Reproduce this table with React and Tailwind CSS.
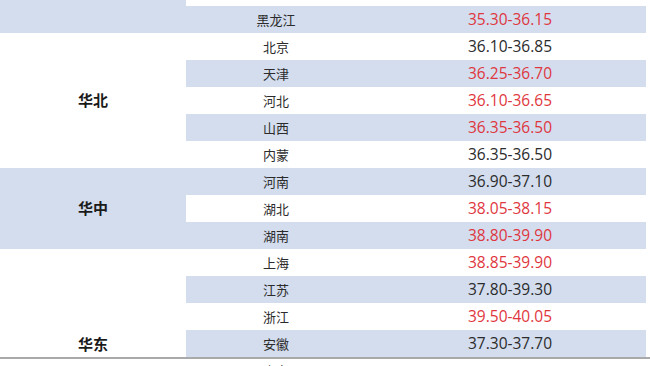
import React from 'react';

const groups = [
  {
    name: '',
    blue: true,
    rows: [{ city: '黑龙江', price: '35.30-36.15', up: true }],
  },
  {
    name: '华北',
    blue: false,
    rows: [
      { city: '北京', price: '36.10-36.85', up: false },
      { city: '天津', price: '36.25-36.70', up: true },
      { city: '河北', price: '36.10-36.65', up: true },
      { city: '山西', price: '36.35-36.50', up: true },
      { city: '内蒙', price: '36.35-36.50', up: false },
    ],
  },
  {
    name: '华中',
    blue: true,
    rows: [
      { city: '河南', price: '36.90-37.10', up: false },
      { city: '湖北', price: '38.05-38.15', up: true },
      { city: '湖南', price: '38.80-39.90', up: true },
    ],
  },
  {
    name: '华东',
    blue: false,
    // label sits at the middle of a longer group that runs past the bottom edge
    labelTop: true,
    rows: [
      { city: '上海', price: '38.85-39.90', up: true },
      { city: '江苏', price: '37.80-39.30', up: false },
      { city: '浙江', price: '39.50-40.05', up: true },
      { city: '安徽', price: '37.30-37.70', up: false },
      { city: '山东', price: '', up: false },
    ],
  },
];

const cjk = { fontFamily: '"Noto Sans CJK SC", "Noto Sans", sans-serif' };

export default function App() {
  let index = 0;

  return (
    <div className="relative w-[650px] h-[366px] overflow-hidden bg-white">
      <div className="w-[646px]" style={cjk}>
        {/* tail of the row above 黑龙江 */}
        <div className="flex h-[6px]">
          <div className="w-[186px] bg-[#d3ddee]" />
          <div className="flex-1 bg-white" />
        </div>
        {groups.map((group, gi) => (
          <div key={gi} className="flex">
            <div
              className={`w-[186px] shrink-0 flex justify-center text-[15px] font-bold text-[#1a1a1a] ${
                group.labelTop ? 'items-start pt-[84px]' : 'items-center'
              } ${group.blue ? 'bg-[#d3ddee]' : 'bg-white'}`}
            >
              {group.name}
            </div>
            <div className="flex-1">
              {group.rows.map((row) => {
                const blue = index++ % 2 === 0;
                return (
                  <div
                    key={row.city}
                    className={`flex h-[27px] items-center ${blue ? 'bg-[#d3ddee]' : 'bg-white'}`}
                  >
                    <div className="w-[180px] text-center text-[13px] text-[#2b2b2b]">{row.city}</div>
                    <div
                      className={`flex-1 pl-[8px] text-center text-[15.5px] ${
                        row.up ? 'text-[#df373e]' : 'text-[#2b2b2b]'
                      }`}
                      style={{ fontFamily: '"Open Sans", "Noto Sans CJK SC", sans-serif' }}
                    >
                      {row.price}
                    </div>
                  </div>
                );
              })}
            </div>
          </div>
        ))}
      </div>
      <div className="absolute left-0 top-[357px] w-full h-[2px] bg-[#a9a9a9]" />
    </div>
  );
}
